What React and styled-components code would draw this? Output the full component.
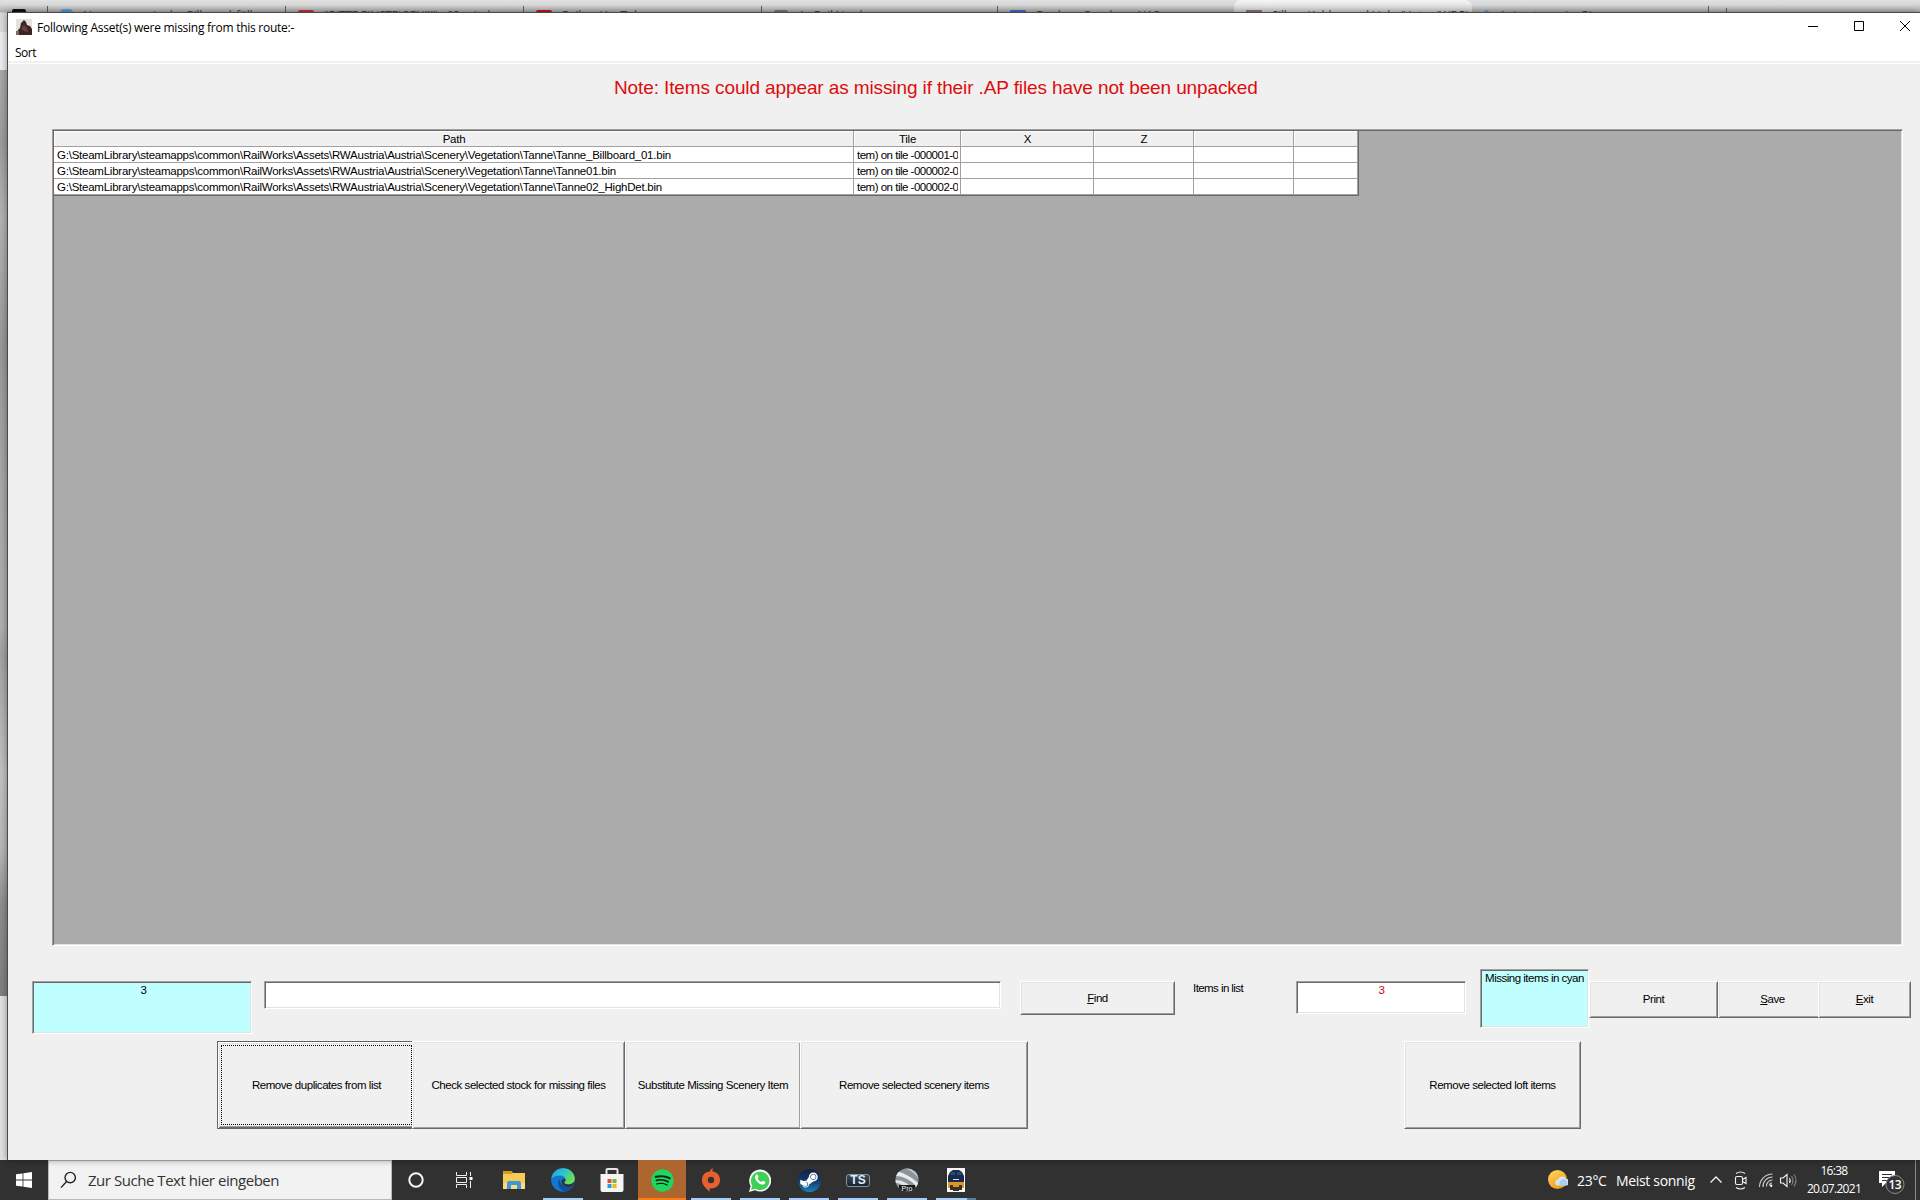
import React from 'react'
import styled, { createGlobalStyle } from 'styled-components'
import { FaSpotify, FaSteamSymbol } from 'react-icons/fa'

const GlobalStyle = createGlobalStyle`
    * {
        box-sizing: border-box;
    }
    body {
        margin: 0;
        overflow: hidden;
        font-family: "Liberation Sans", Arial, sans-serif;
    }
`

const Desktop = styled.div`
    position: relative;
    display: flex;
    flex-direction: column;
    width: 1920px;
    height: 1200px;
    overflow: hidden;
`

/* browser behind the dialog */

const Browser = styled.div`
    display: flex;
    flex-direction: column;
    height: 1160px;
    background: #e1e1e1;
`

const TabStrip = styled.div`
    display: flex;
    height: 32px;
    flex: none;
    background: linear-gradient(#e2e2e2 0, #d6d6d6 5px, #adadad 12px, #dadada 13px);
`

const Tab = styled.div`
    display: flex;
    align-items: flex-start;
    width: ${props => props.$w}px;
    height: 12px;
    padding: 8px 0 0 12px;
    overflow: hidden;
    white-space: nowrap;
    font: 12px "Open Sans", sans-serif;
    line-height: 15px;
    color: #444;
    border-radius: ${props => props.$active ? '7px 7px 0 0' : '0'};
    background: ${props => props.$active ? 'linear-gradient(#f6f6f6, #cfcfcf)' : 'none'};
`

const TabLine = styled.div`
    width: 1px;
    height: 7px;
    margin-top: 6px;
    background: #5c5c5c;
`

const NewTab = styled(TabLine)`
    height: 4px;
    margin: 8px 0 0 17px;
`

const TabIcon = styled.span`
    width: ${props => props.$w}px;
    height: 8px;
    margin: ${props => props.$top || 2}px 10px 0 0;
    flex: none;
    border-radius: ${props => props.$r || 2}px;
    background: ${props => props.$color};
`

const TabText = styled.span`
    letter-spacing: -0.3px;
`

const BrowserBar = styled.div`
    height: 38px;
    flex: none;
    background: #ededed;
`

const BrowserPhoto = styled.div`
    height: 926px;
    flex: none;
    background: linear-gradient(#a9a9a9, #9c9c9c 8%, #b4b4b4 16%, #989898 30%, #a8a8a8 45%, #b0b0b0 60%, #a2a2a2 63%, #c2c2c2 76%, #b8b8b8 84%, #8e8e8e 90%, #7f7f7f);
`

/* dialog window */

const Window = styled.div`
    position: absolute;
    left: 7px;
    top: 12px;
    width: 1913px;
    height: 1148px;
    display: flex;
    flex-direction: column;
    border: 1px solid #4a4a4a;
    border-width: 1px 0 0 1px;
    background: #f0f0f0;
    box-shadow: 0 0 7px rgba(0, 0, 0, 0.4);
`

const TitleBar = styled.div`
    display: flex;
    align-items: center;
    height: 30px;
    padding: 0 10px 2px 8px;
    background: white;
`

const Title = styled.span`
    flex: 1;
    margin-left: 5px;
    font: 12px "Open Sans", sans-serif;
    letter-spacing: -0.26px;
    color: black;
`

const WindowButtons = styled.div`
    display: flex;
    gap: 35px;
    margin-top: -1px;
`

const MenuBar = styled.div`
    height: 18px;
    padding-left: 7px;
    background: white;
    font: 12px "Open Sans", sans-serif;
    line-height: 19px;
    letter-spacing: -0.5px;
`

const MenuEdge = styled.div`
    height: 3px;
    background: #f0f0f0;
    border-bottom: 1px solid white;
`

const Client = styled.div`
    display: flex;
    flex-direction: column;
`

const Note = styled.div`
    height: 65px;
    padding-left: 606px;
    font-size: 19px;
    line-height: 48px;
    letter-spacing: -0.113px;
    white-space: nowrap;
    color: #dc0d0d;
`

const Sunken = styled.div`
    border: 1px solid;
    border-color: #a0a0a0 white white #a0a0a0;
    box-shadow: inset 1px 1px #696969, inset -1px -1px #e3e3e3;
`

const GridPanel = styled(Sunken)`
    width: 1851px;
    height: 817px;
    margin-left: 44px;
    padding: 1px;
    background: #ababab;
`

const Table = styled.div`
    display: inline-block;
    vertical-align: top;
    border: 1px solid #696969;
    border-width: 0 1px 1px 0;
`

const Row = styled.div`
    display: grid;
    grid-template-columns: 800px 107px 133px 100px 100px 64px;
    height: 16px;
`

const Cell = styled.div`
    padding: 0 2px 0 3px;
    overflow: hidden;
    white-space: nowrap;
    font-size: 11.5px;
    line-height: 16px;
    letter-spacing: ${props => props.$tight || -0.235}px;
    background: white;
    border: 1px solid #a0a0a0;
    border-width: 0 1px 1px 0;
`

const HeadCell = styled(Cell)`
    text-align: center;
    background: #f0f0f0;
    box-shadow: inset 1px 1px white;
`

const CellClip = styled.div`
    overflow: hidden;
`

const Controls = styled.div`
    display: flex;
    align-items: flex-start;
    height: 72px;
    margin-top: 23px;
    padding-left: 24px;
`

const Field = styled(Sunken)`
    width: ${props => props.$w}px;
    height: ${props => props.$h}px;
    margin: ${props => props.$top === undefined ? 12 : props.$top}px 0 0 ${props => props.$left || 0}px;
    padding: 1px 0 0 ${props => props.$shift || 0}px;
    background: ${props => props.$cyan ? '#c0ffff' : 'white'};
    color: ${props => props.$red ? '#c00808' : 'black'};
    font-size: 11.5px;
    line-height: 15px;
    letter-spacing: -0.5px;
    text-align: center;
    white-space: nowrap;
`

const Label = styled.span`
    width: 103px;
    margin: 12px 0 0 18px;
    font-size: 11.5px;
    line-height: 15px;
    letter-spacing: -0.57px;
`

const Button = styled.button`
    position: relative;
    flex: none;
    width: ${props => props.$w}px;
    height: ${props => props.$h}px;
    margin: ${props => props.$top || 0}px ${props => props.$right || 0}px 0 ${props => props.$left || 0}px;
    padding: 0 0 ${props => props.$up || 0}px;
    border: 1px solid;
    border-color: white #696969 #696969 white;
    border-radius: 0;
    box-shadow: inset 1px 1px #e3e3e3, inset -1px -1px #a0a0a0;
    background: #f0f0f0;
    color: black;
    font: 11.5px "Liberation Sans", Arial, sans-serif;
    letter-spacing: -0.45px;
    white-space: nowrap;
`

const DefaultButton = styled(Button)`
    padding: 3px 4px 3px 3px;
    border-color: #646464;
    box-shadow: inset 1px 1px white, inset -1px -1px #696969, inset 2px 2px #e3e3e3, inset -2px -2px #a0a0a0;
`

const FocusRect = styled.span`
    display: flex;
    align-items: center;
    justify-content: center;
    height: 100%;
    border: 1px dotted black;
`

const Actions = styled.div`
    display: flex;
    padding-left: 209px;
`

/* taskbar */

const Taskbar = styled.div`
    display: flex;
    align-items: stretch;
    height: 40px;
    flex: none;
    background: #313131;
    color: white;
    font-family: "Open Sans", sans-serif;
`

const StartButton = styled.div`
    display: flex;
    align-items: center;
    justify-content: center;
    width: 48px;
`

const SearchBox = styled.div`
    display: flex;
    align-items: center;
    width: 344px;
    padding-left: 11px;
    background: #f2f2f2;
    border: 1px solid #b9b9b9;
    color: #333;
    font-size: 15px;
    letter-spacing: -0.46px;
`

const SearchText = styled.span`
    margin-left: 11px;
`

const Apps = styled.div`
    display: flex;
    gap: 1px;
    flex: 1;
`

const TaskButton = styled.div`
    position: relative;
    display: flex;
    align-items: center;
    justify-content: center;
    width: 48px;
    margin-left: ${props => props.$alert ? 1 : 0}px;
    background: ${props => props.$alert ? '#ae6630' : 'transparent'};
`

const Running = styled.span`
    position: absolute;
    left: ${props => props.$alert ? 0 : 4}px;
    right: ${props => props.$alert ? 0 : 4}px;
    bottom: 0;
    height: 2px;
    background: ${props => props.$alert ? '#ff7b0f' : props.$stacked ? 'linear-gradient(90deg, #a5cdf7 31px, #5b7da0 31px)' : '#a5cdf7'};
`

const Disc = styled.span`
    display: flex;
    align-items: center;
    justify-content: center;
    width: ${props => props.$size}px;
    height: ${props => props.$size}px;
    border-radius: 50%;
    background: ${props => props.$color};
    color: white;
    svg {
        flex: none;
    }
`

const TsBadge = styled.span`
    width: 24px;
    height: 13px;
    border: 1px solid #8194a2;
    border-radius: 3px;
    background: linear-gradient(#3b4d5f, #16222f);
    color: #e4ebf0;
    font: bold 12px "Liberation Sans", sans-serif;
    line-height: 11px;
    text-align: center;
`

const Tray = styled.div`
    display: flex;
    align-items: center;
    width: 372px;
    font-size: 14px;
`

const Temp = styled.span`
    width: 39px;
    margin-left: 9px;
    letter-spacing: -0.3px;
`

const Weather = styled.span`
    width: 93px;
    letter-spacing: -0.33px;
    white-space: nowrap;
`

const Clock = styled.div`
    width: 60px;
    margin-left: 5px;
    font-size: 12px;
    line-height: 18px;
    letter-spacing: -0.7px;
    text-align: center;
`

const Notifications = styled.div`
    display: flex;
    margin-left: 15px;
`

const ShowDesktop = styled.div`
    width: 5px;
    height: 40px;
    margin-left: auto;
    border-left: 1px solid #8a8a8a;
`

const rows = [
    { path: 'G:\\SteamLibrary\\steamapps\\common\\RailWorks\\Assets\\RWAustria\\Austria\\Scenery\\Vegetation\\Tanne\\Tanne_Billboard_01.bin', tile: 'tem) on tile -000001-0' },
    { path: 'G:\\SteamLibrary\\steamapps\\common\\RailWorks\\Assets\\RWAustria\\Austria\\Scenery\\Vegetation\\Tanne\\Tanne01.bin', tile: 'tem) on tile -000002-0' },
    { path: 'G:\\SteamLibrary\\steamapps\\common\\RailWorks\\Assets\\RWAustria\\Austria\\Scenery\\Vegetation\\Tanne\\Tanne02_HighDet.bin', tile: 'tem) on tile -000002-0' },
]

const columns = ['Path', 'Tile', 'X', 'Z', '', '']

function BrowserTabs() {
    return (
        <TabStrip>
            <Tab $w={47}><TabIcon $w={14} $color='#111' $top={1}/></Tab>
            <TabLine/>
            <Tab $w={237}><TabIcon $w={13} $r={6} $top={1} $color='#5a97dc'/><TabText>Neuerungen in der Bilbao abfüllen</TabText></Tab>
            <TabLine/>
            <Tab $w={237}><TabIcon $w={16} $color='#c4333b'/><TabText>"BITTE EINSTEIGEN!!!" - 03 mit dem</TabText></Tab>
            <TabLine/>
            <Tab $w={237}><TabIcon $w={16} $color='#c4161c'/><TabText>Railtex YouTube</TabText></Tab>
            <TabLine/>
            <Tab $w={235}><TabIcon $w={14} $color='#77767c'/><TabText>A &nbsp; Rail Nerd</TabText></Tab>
            <TabLine/>
            <Tab $w={236}><TabIcon $w={16} $r={1} $color='#3e70c4'/><TabText>Dankow Gundow - NAS</TabText></Tab>
            <Tab $w={238} $active><TabIcon $w={16} $r={1} $color='#8d7378'/><TabText>Silber, Kohlen und Links/Unter (WDR)</TabText></Tab>
            <Tab $w={236}><TabIcon $w={5} $r={3} $color='#5a97dc'/><TabText>Animatoren im Bi</TabText></Tab>
            <TabLine/>
            <NewTab/>
        </TabStrip>
    )
}

function LocoIcon() {
    return (
        <svg width='16' height='16' viewBox='0 0 16 16'>
            <rect width='16' height='16' fill='#e3e3de'/>
            <path d='M1 16 2 11 4 9 5 4 8 1 10 3 11 6 14 7 16 10v6z' fill='#3d2422'/>
            <path d='M5 10 8 6 11 9 12 13 8 12z' fill='#65433d'/>
            <path d='M0 12h3v4H0z' fill='#7b6b66'/>
        </svg>
    )
}

function SearchIcon() {
    return (
        <svg width='17' height='18' viewBox='0 0 17 18' fill='none' stroke='#222' strokeWidth='1.4'>
            <circle cx='10.2' cy='6.6' r='5.2'/>
            <path d='M6.6 10.5 1 16.6'/>
        </svg>
    )
}

function TaskViewIcon() {
    return (
        <svg width='18' height='16' viewBox='0 0 18 16' fill='none' stroke='#f1f1f1' strokeWidth='1'>
            <path d='M.5 0v3.5h10V0M.5 16v-3.5h10V16M.5 5.5h10v5H.5zM14.5 0v4M14.5 9v7'/>
            <path d='M13.500 5h3v3h-3z' fill='#fff' stroke='none'/>
        </svg>
    )
}

function ExplorerIcon() {
    return (
        <svg width='22' height='19' viewBox='0 0 22 19'>
            <path d='M0 0h8l2 2h12v16H0z' fill='#f7cb55'/>
            <path d='M0 0h8l2 2-1 1H0z' fill='#d99b1c'/>
            <path d='M0 12h22v6H0z' fill='#fbdc7c'/>
            <path d='M4 18v-6q0-2 2-2h10q2 0 2 2v6h-4v-4H8v4z' fill='#3f97d9'/>
        </svg>
    )
}

function EdgeIcon() {
    return (
        <svg width='24' height='24' viewBox='0 0 24 24'>
            <defs>
                <linearGradient id='edgeTop' x1='0' x2='1' y2='.5'>
                    <stop offset='0' stopColor='#1b9de2'/>
                    <stop offset='.5' stopColor='#2cc3d3'/>
                    <stop offset='1' stopColor='#6ee04e'/>
                </linearGradient>
            </defs>
            <circle cx='12' cy='12' r='11.8' fill='#1278cf'/>
            <path d='M.4 11C1 4.500 6 .2 12 .2c7 0 11.800 5 11.800 10.300 0 3.500-2.800 6-6.300 6-2.500 0-4.300-.8-4.300-2 0-.8 1.300-1.200 1.300-3 0-2.300-2.300-4-5.500-4C5 7.500 1.800 9 .4 11z' fill='url(#edgeTop)'/>
            <path d='M8.500 11.200c-3 3-1.500 10.500 5.500 12.400 4-.4 7-2.800 8.600-5.600-2 .9-4 1.200-6 1-5-.6-7.700-4-8.100-7.800z' fill='#114f9e'/>
            <path d='M13.200 14.500c0 1.200 1.800 2 4.300 2 2.300 0 4.200-1 5.300-2.700.3 1.400-.3 3-1.200 4.200-1.600.8-3.500 1.200-5.300.9-3.300-.5-6.400-3.400-5.600-6.500.5-1.200 1.700-1.800 3-1.600 1.500.9.900 2.300.1 2.800z' fill='#313131'/>
        </svg>
    )
}

function StoreIcon() {
    return (
        <svg width='24' height='24' viewBox='0 0 24 24'>
            <path d='M6.500 8V2q0-1 1-1h9q1 0 1 1v6' fill='none' stroke='#e4e4e4' strokeWidth='2'/>
            <path d='M.5 6h23v16q0 2-2 2h-19q-2 0-2-2z' fill='#f4f4f4'/>
            <path d='M7.500 11h4v4h-4z' fill='#e5502c'/>
            <path d='M12.500 11h4v4h-4z' fill='#7fb332'/>
            <path d='M7.500 16h4v4h-4z' fill='#1c9fe4'/>
            <path d='M12.500 16h4v4h-4z' fill='#fbb50f'/>
        </svg>
    )
}

function OriginIcon() {
    return (
        <svg width='20' height='24' viewBox='0 0 20 24'>
            <path d='M12 0C10 1 9.300 2 9 3.500 4 3.500 1 7.500 1 12c0 2.500 1 5 2.500 6.500C5 20 6 22 9 24c-.8-1.500-.7-2.500-.2-3.600C15 21 19 17 19 12c0-2.500-.8-4.500-2.200-6C15 4.200 13 4 11.600 3.300 11.300 2 11.500 1 12 0z' fill='#e8602f'/>
            <circle cx='10' cy='12' r='3.200' fill='#313131'/>
        </svg>
    )
}

function WhatsappIcon() {
    return (
        <svg width='22' height='23' viewBox='0 0 22 23'>
            <path d='M0 23 1.600 17A11 11 0 1 1 6 21.300z' fill='#f4f7f4'/>
            <path d='M2 21 3.300 16.600A9.200 9.200 0 1 1 6.400 19.700z' fill='#3fcf55'/>
            <path d='M7.300 5.500c.5-.4 1.200-.2 1.500.4l.8 1.900c.1.400-.7 1.200-.9 1.600.8 1.700 2.100 2.900 3.800 3.600.5-.3 1-1.400 1.500-1.200l2 1c.7.400.2 1.700-.4 2.200-1.600 1.300-4 .3-6-1.100-1.800-1.400-3.400-3.500-3.600-5.200-.1-1.200.5-2.500 1.300-3.200z' fill='#fff'/>
        </svg>
    )
}

function EarthIcon() {
    return (
        <svg width='24' height='24' viewBox='0 0 24 24'>
            <defs><clipPath id='globe'><circle cx='12' cy='12' r='11.500'/></clipPath></defs>
            <g clipPath='url(#globe)'>
                <rect width='24' height='24' fill='#8c949b'/>
                <path d='M0 3C7 4 16 8 24 16l-1 4C15 11 8 8 0 8z' fill='#e9ecee'/>
                <path d='M0 12c7 0 13 3 18 9l-5 3C9 17 5 15 0 15z' fill='#e0e4e6'/>
                <path d='M8 0c6 1 12 5 16 11V5L16 0z' fill='#c0c6cb'/>
                <rect x='4' y='17' width='16' height='7' fill='#1b1b1b'/>
            </g>
            <text x='12' y='22.500' fontSize='7' textAnchor='middle' fill='#fff' fontFamily='Liberation Sans'>Pro</text>
        </svg>
    )
}

function TrainIcon() {
    return (
        <svg width='18' height='24' viewBox='0 0 18 24'>
            <rect width='18' height='24' fill='#f5f5f3'/>
            <path d='M3 4 6 2h6l3 2 2 4v7H1V8z' fill='#17294d'/>
            <path d='M4 4h4v3H3zM10 4h4l1 3h-5z' fill='#2d4a6d'/>
            <path d='M1 14h16v6H1z' fill='#d99a25'/>
            <path d='M3 17h3v5H3zM12 17h3v5h-3zM6 19h6v4H6z' fill='#3a302a'/>
            <path d='M6 11h6v1H6z' fill='#d8dde5'/>
        </svg>
    )
}

function WeatherIcon() {
    return (
        <svg width='20' height='20' viewBox='0 0 20 20'>
            <defs>
                <linearGradient id='sun' x2='.6' y2='1'>
                    <stop offset='0' stopColor='#ffd95c'/>
                    <stop offset='1' stopColor='#f39a1b'/>
                </linearGradient>
            </defs>
            <circle cx='9.500' cy='9.500' r='9.500' fill='url(#sun)'/>
            <path d='M10.500 15.500a3 3 0 0 1-.3-6 4.200 4.200 0 0 1 7.800-.6 3.300 3.300 0 0 1 0 6.600z' fill='#cfe6f9'/>
            <path d='M12 15.500a4 4 0 0 1 7-4.200 3 3 0 0 1-1 4.200z' fill='#a9cdee'/>
        </svg>
    )
}

function TrayIcons() {
    return (
        <svg width='90' height='20' viewBox='0 0 90 20' fill='none' stroke='#f2f2f2' strokeWidth='1.100'>
            <path d='M1.500 12.500 7 7l5.500 5.500' strokeWidth='1.400'/>
            <rect x='26.500' y='6.500' width='7' height='8' rx='1.500'/>
            <path d='m33.500 9.500 3.500-2v6l-3.500-2M27 3.500q4.500-3 9 0M27 17.500q4.500 3 9 0'/>
            <path d='M60.500 15.500a2.500 2.500 0 0 1 2.500-2.500M57.500 16.500a6 6 0 0 1 6-6.500M54 17a9.500 9.500 0 0 1 9.500-10M50.500 17a13 13 0 0 1 13-13' stroke='#cfcfcf'/>
            <circle cx='62.200' cy='15.800' r='1.200' fill='#fff' stroke='none'/>
            <path d='M71.500 8v5h2.500l4 3.500v-12L74 8z'/>
            <path d='M80.500 8q1.500 2.500 0 5'/>
            <path d='M82.500 6q3 4.500 0 9M85 4.500q4 6 0 12' stroke='#808080'/>
        </svg>
    )
}

function NotificationIcon() {
    return (
        <svg width='27' height='27' viewBox='0 0 27 27'>
            <path d='M0 4h16v12H7l-4 4v-4H0z' fill='#fff'/>
            <path d='M3 7.500h10M3 10.500h10M3 13.500h6' stroke='#313131'/>
            <circle cx='16' cy='17.500' r='9' fill='#333' stroke='#8c8c8c'/>
            <text x='15.800' y='22' fontSize='12' fontWeight='600' textAnchor='middle' fill='#fff' fontFamily='Open Sans' letterSpacing='-.6'>13</text>
        </svg>
    )
}

function AssetTable() {
    return (
        <Table>
            <Row>
                {columns.map((name, index) => <HeadCell key={index}>{name}</HeadCell>)}
            </Row>
            {rows.map(row => (
                <Row key={row.path}>
                    <Cell>{row.path}</Cell>
                    <Cell $tight={-0.5}><CellClip>{row.tile}</CellClip></Cell>
                    <Cell/>
                    <Cell/>
                    <Cell/>
                    <Cell/>
                </Row>
            ))}
        </Table>
    )
}

function MissingAssets() {
    return (
        <Window>
            <TitleBar>
                <LocoIcon/>
                <Title>Following Asset(s) were missing from this route:-</Title>
                <WindowButtons>
                    <svg width='11' height='11'><path d='M0 5.500h10' stroke='#000'/></svg>
                    <svg width='11' height='11'><path d='M.5.500h9v9h-9z' fill='none' stroke='#000'/></svg>
                    <svg width='10' height='11'><path d='m0 0 10 10M10 0 0 10' stroke='#000'/></svg>
                </WindowButtons>
            </TitleBar>
            <MenuBar>Sort</MenuBar>
            <MenuEdge/>
            <Client>
                <Note>Note: Items could appear as missing if their .AP files have not been unpacked</Note>
                <GridPanel>
                    <AssetTable/>
                </GridPanel>
                <Controls>
                    <Field $w={220} $h={53} $shift={3} $cyan>3</Field>
                    <Field $w={737} $h={28} $left={12}/>
                    <Button $w={155} $h={34} $top={12} $left={19}><u>F</u>ind</Button>
                    <Label>Items in list</Label>
                    <Field $w={170} $h={33} $shift={1} $red>3</Field>
                    <Field $w={109} $h={59} $top={0} $left={14} $cyan>Missing items in cyan</Field>
                    <Button $w={129} $h={37} $top={12} $up={1}>Print</Button>
                    <Button $w={109} $h={37} $top={12} $right={-9} $up={1}><u>S</u>ave</Button>
                    <Button $w={93} $h={37} $top={12} $up={1}><u>E</u>xit</Button>
                </Controls>
                <Actions>
                    <DefaultButton $w={200} $h={88} $right={-5}>
                        <FocusRect>Remove duplicates from list</FocusRect>
                    </DefaultButton>
                    <Button $w={213} $h={88}>Check selected stock for missing files</Button>
                    <Button $w={176} $h={88}>Substitute Missing Scenery Item</Button>
                    <Button $w={228} $h={88} $left={-1}>Remove selected scenery items</Button>
                    <Button $w={177} $h={88} $left={376}>Remove selected loft items</Button>
                </Actions>
            </Client>
        </Window>
    )
}

function WindowsTaskbar() {
    return (
        <Taskbar>
            <StartButton>
                <svg width='16' height='16' viewBox='0 0 16 16' fill='#fff'>
                    <path d='M0 2.300 6.600 1.400v6.200H0zM7.400 1.300 16 0v7.600H7.400zM0 8.400h6.600v6.200L0 13.700zM7.400 8.400H16V16l-8.600-1.200z'/>
                </svg>
            </StartButton>
            <SearchBox>
                <SearchIcon/>
                <SearchText>Zur Suche Text hier eingeben</SearchText>
            </SearchBox>
            <Apps>
                <TaskButton><svg width='16' height='16'><circle cx='8' cy='8' r='6.700' fill='none' stroke='#f5f5f5' strokeWidth='2'/></svg></TaskButton>
                <TaskButton><TaskViewIcon/></TaskButton>
                <TaskButton><ExplorerIcon/></TaskButton>
                <TaskButton><EdgeIcon/><Running/></TaskButton>
                <TaskButton><StoreIcon/></TaskButton>
                <TaskButton $alert>
                    <Disc $size={21} $color='#0c2414'><FaSpotify size={23} color='#1ed760'/></Disc>
                    <Running $alert/>
                </TaskButton>
                <TaskButton><OriginIcon/><Running/></TaskButton>
                <TaskButton><WhatsappIcon/><Running/></TaskButton>
                <TaskButton>
                    <Disc $size={23} $color='linear-gradient(#13213f, #12396b 50%, #1b7fb8)'><FaSteamSymbol size={20}/></Disc>
                    <Running/>
                </TaskButton>
                <TaskButton><TsBadge>TS</TsBadge><Running/></TaskButton>
                <TaskButton><EarthIcon/><Running/></TaskButton>
                <TaskButton><TrainIcon/><Running $stacked/></TaskButton>
            </Apps>
            <Tray>
                <WeatherIcon/>
                <Temp>23°C</Temp>
                <Weather>Meist sonnig</Weather>
                <TrayIcons/>
                <Clock>16:38<br/>20.07.2021</Clock>
                <Notifications><NotificationIcon/></Notifications>
                <ShowDesktop/>
            </Tray>
        </Taskbar>
    )
}

export default function App() {
    return (
        <Desktop>
            <GlobalStyle/>
            <Browser>
                <BrowserTabs/>
                <BrowserBar/>
                <BrowserPhoto/>
            </Browser>
            <MissingAssets/>
            <WindowsTaskbar/>
        </Desktop>
    )
}
